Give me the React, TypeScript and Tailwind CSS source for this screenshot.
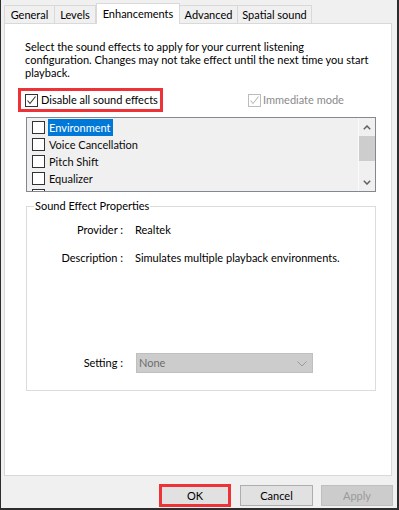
import React from "react";

const Check = ({ color = "#333" }: { color?: string }) => (
  <svg width="11" height="11" viewBox="0 0 11 11" className="block">
    <polyline points="1.5,5.5 4,8.5 9.5,1.5" fill="none" stroke={color} strokeWidth="1.1" />
  </svg>
);

const Box = ({ checked, disabled }: { checked?: boolean; disabled?: boolean }) => (
  <div
    className={
      "w-[13px] h-[13px] border flex items-center justify-center shrink-0 " +
      (disabled ? "border-[#bcbcbc] bg-white" : "border-[#333333] bg-white")
    }
  >
    {checked ? <Check color={disabled ? "#bcbcbc" : "#333"} /> : null}
  </div>
);

const Tab = ({ label, w, selected }: { label: string; w: string; selected?: boolean }) => (
  <div
    className={
      selected
        ? `${w} h-[21px] -mb-px bg-white border-t border-l border-r border-[#d9d9d9] flex items-start justify-center pt-[2px] relative z-10 whitespace-nowrap`
        : `${w} h-[18px] bg-[#f0f0f0] border-t border-r border-[#d9d9d9] flex items-center justify-center whitespace-nowrap`
    }
  >
    {label}
  </div>
);

export default function App() {
  const rows = ["Environment", "Voice Cancellation", "Pitch Shift", "Equalizer", ""];
  return (
    <div className="w-[399px] h-[510px] bg-[#f0f0f0] border-l border-r-2 border-b-2 border-[#2d2d2d] flex flex-col text-[11px] text-black overflow-hidden font-[family-name:Lato,sans-serif]">
      {/* tabs */}
      <div className="flex items-end h-[23px] pl-[3px] leading-[16px]">
        <div className="w-[51px] h-[18px] bg-[#f0f0f0] border-t border-l border-r border-[#d9d9d9] flex items-center justify-center">
          General
        </div>
        <Tab label="Levels" w="w-[41px]" />
        <Tab label="Enhancements" w="w-[84px]" selected />
        <Tab label="Advanced" w="w-[58px]" />
        <Tab label="Spatial sound" w="w-[74px]" />
      </div>

      {/* panel */}
      <div className="ml-[3px] w-[388px] h-[453px] border border-[#d9d9d9] bg-white flex flex-col shrink-0">
        <p className="ml-[20px] mt-[16px] leading-[13px] whitespace-nowrap">
          Select the sound effects to apply for your current listening
          <br />
          configuration. Changes may not take effect until the next time you start
          <br />
          playback.
        </p>

        <div className="flex items-center mt-[9px]">
          <div className="ml-[13px] w-[145px] h-[24px] border-[3px] border-[#ee3338] flex items-center pl-[4px] gap-[3px] leading-[16px]">
            <Box checked />
            <span className="whitespace-nowrap">Disable all sound effects</span>
          </div>
          <div className="ml-[85px] flex items-center gap-[2px] text-[#8a8a8a] leading-[16px]">
            <Box checked disabled />
            <span className="whitespace-nowrap">Immediate mode</span>
          </div>
        </div>

        {/* list */}
        <div className="ml-[21px] mt-[5px] w-[350px] h-[75px] border border-[#828790] bg-[#f0f0f0] flex overflow-hidden">
          <div className="flex-1 pt-[1px] flex flex-col leading-[16px]">
            {rows.map((r, i) => (
              <div key={i} className="h-[17px] flex items-center pl-[5px] shrink-0">
                <Box />
                <span
                  className={
                    "ml-[3px] pl-[1px] pr-[2px] h-[17px] flex items-center whitespace-nowrap " +
                    (i === 0 ? "bg-[#0078d7] text-white" : "text-[#0a0a0a]")
                  }
                >
                  {r}
                </span>
              </div>
            ))}
          </div>
          <div className="w-[17px] border-l border-[#fafafa] bg-[#f0f0f0] flex flex-col items-center">
            <div className="h-[18px] w-full flex items-center justify-center">
              <svg width="8" height="5" viewBox="0 0 8 5">
                <polyline points="0.8,4.2 4,1 7.2,4.2" fill="none" stroke="#606060" strokeWidth="1.5" />
              </svg>
            </div>
            <div className="w-[16px] h-[25px] bg-[#cdcdcd]" />
            <div className="flex-1" />
            <div className="h-[18px] w-full flex items-center justify-center">
              <svg width="8" height="5" viewBox="0 0 8 5">
                <polyline points="0.8,0.8 4,4 7.2,0.8" fill="none" stroke="#606060" strokeWidth="1.5" />
              </svg>
            </div>
          </div>
        </div>

        {/* group box */}
        <div className="ml-[21px] mt-[14px] w-[350px] h-[185px] border border-[#dcdcdc] relative leading-[16px]">
          <div className="absolute -top-[9px] left-[7px] bg-white px-[1px] whitespace-nowrap">
            Sound Effect Properties
          </div>
          <div className="grid grid-cols-[96px_1fr] gap-x-[12px] mt-[15px]">
            <div className="text-right whitespace-nowrap">Provider :</div>
            <div>Realtek</div>
            <div className="text-right whitespace-nowrap mt-[12px]">Description :</div>
            <div className="mt-[12px] whitespace-nowrap">Simulates multiple playback environments.</div>
            <div className="text-right whitespace-nowrap mt-[87px] h-[20px] flex items-center justify-end">
              Setting :
            </div>
            <div className="mt-[87px]">
              <div className="ml-px w-[177px] h-[20px] bg-[#cccccc] border border-[#bfbfbf] flex items-center pl-[2px] text-[#6d6d6d] relative">
                None
                <svg className="absolute right-[5px] top-[7px]" width="10" height="6" viewBox="0 0 10 6">
                  <polyline points="0.5,0.5 5,5 9.5,0.5" fill="none" stroke="#9a9a9a" strokeWidth="1" />
                </svg>
              </div>
            </div>
          </div>
        </div>
      </div>

      {/* buttons */}
      <div className="flex justify-end items-start pr-[4px] mt-[8px] leading-[16px]">
        <div className="w-[72px] h-[23px] border-[3px] border-[#ee3338] bg-[#e1e1e1] flex items-center justify-center">
          OK
        </div>
        <div className="ml-[9px] mt-[1px] w-[73px] h-[21px] border border-[#adadad] bg-[#e1e1e1] flex items-center justify-center">
          Cancel
        </div>
        <div className="ml-[8px] mt-[1px] w-[72px] h-[21px] border border-[#bfbfbf] bg-[#cccccc] text-[#9a9a9a] flex items-center justify-center">
          Apply
        </div>
      </div>
    </div>
  );
}
